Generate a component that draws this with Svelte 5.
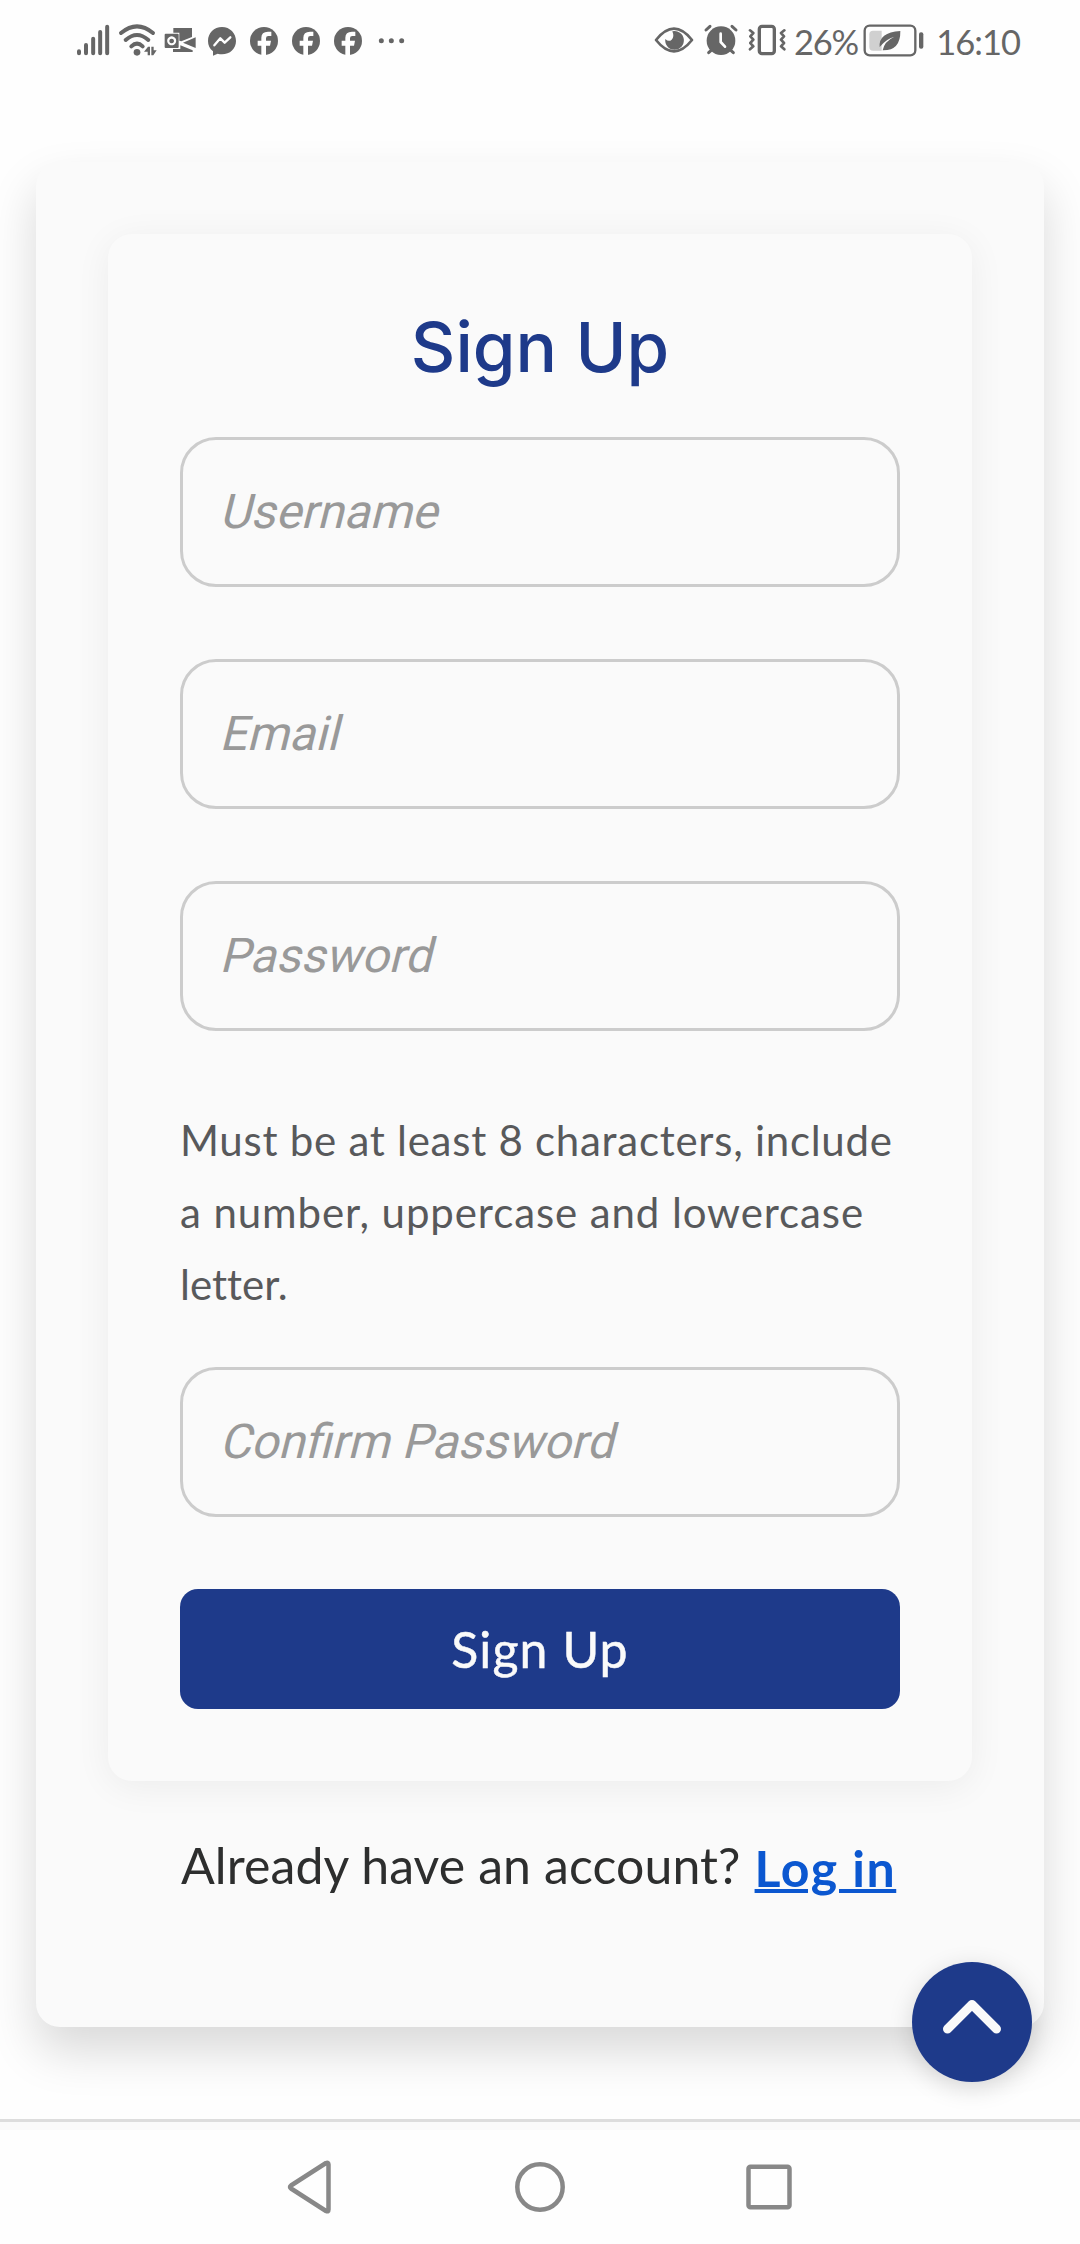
<script>
  let username = $state('');
  let email = $state('');
  let password = $state('');
  let confirm = $state('');

  const notifications = [612, 738, 864];
</script>

<div class="screen">
  <header class="status">
    <svg class="left-icons" viewBox="0 0 1080 180" width="360" height="60" aria-hidden="true">
      <g stroke-width="12" stroke-linecap="round" stroke="#666">
        <path d="M57 124v6M78 105v25M99.500 86v44M120.500 66v64M141.500 50v80" />
      </g>
      <g fill="none" stroke="#666" stroke-width="12" stroke-linecap="round">
        <path d="M183 69Q231 29 279 69M197 90Q231 60 265 90M214 109Q231 93 248 109" />
      </g>
      <circle cx="231" cy="127" r="10" fill="#666" />
      <path d="M252 125l12-15h6v26h-7v-11zM274 110h7v11h9l-10 15h-6z" fill="#666" />
      <g fill="#666">
        <path d="M340 54h56v27l-32 13-6-2V68h-18zM369 98l38-16v32zM339 117h22v-11l37 15v5h-59z" />
        <path fill-rule="evenodd" d="M317 71h36q3 0 3 3v37q0 3-3 3h-36q-3 0-3-3v-37q0-3 3-3zM335 79a13.500 13.500 0 1 0 .1 0zM335 86a7 7 0 1 1-.1 0z" />
        <path d="M486 51c-24 0-42 18-42 42 0 13 5 23 15 31v13l14-6c4 1 9 2 13 2 24 0 42-17 42-40s-18-42-42-42z" />
        {#each notifications as cx}
          <circle {cx} cy="93" r="42" />
        {/each}
        <circle cx="964" cy="92" r="7.500" />
        <circle cx="994" cy="92" r="7.500" />
        <circle cx="1025" cy="92" r="7.500" />
      </g>
      <path d="M463 106l18-21 13 13 17-16" fill="none" stroke="#fff" stroke-width="7" stroke-linejoin="round" stroke-linecap="round" />
      {#each notifications as cx}
        <path transform="translate({cx} 93)" d="M-8 44V14h-11V-1h11v-9q0-18 20-18h10v13H13q-7 0-7 7v7h15l-3 15H6v30z" fill="#fff" />
      {/each}
    </svg>

    <div class="right">
      <svg viewBox="0 0 450 180" width="150" height="60" aria-hidden="true">
        <path d="M48 90Q102 22 156 90Q102 158 48 90z" fill="none" stroke="#666" stroke-width="8" stroke-linejoin="round" />
        <path d="M97 64a28 28 0 1 1-21 23q10 10 19 2 9-8 2-25z" fill="#666" />
        <g stroke="#666" stroke-width="9" stroke-linecap="round">
          <path d="M198 60l12-11M288 60l-12-11M206 128l10-9M280 128l-10-9" />
        </g>
        <circle cx="243" cy="92" r="43" fill="#666" />
        <path d="M242 71v25l13 14" fill="none" stroke="#fff" stroke-width="8" stroke-linecap="round" stroke-linejoin="round" />
        <rect x="358" y="49" width="45" height="82" rx="8" fill="none" stroke="#666" stroke-width="10" />
        <path d="M330 61l10 8-9 10 9 10-9 10 9 10-10 9M433 61l-10 8 9 10-9 10 9 10-9 10 10 9" fill="none" stroke="#666" stroke-width="8" stroke-linecap="round" stroke-linejoin="round" />
      </svg>
      <span class="percent">26%</span>
      <svg viewBox="666 0 195 180" width="65" height="60" aria-hidden="true">
        <rect x="677" y="47" width="152" height="89" rx="15" fill="none" stroke="#666" stroke-width="7" />
        <path d="M702 62h26v60h-26q-11 0-11-11V73q0-11 11-11z" fill="#d0d0d0" />
        <path d="M784 63q-66 5-62 48 20-25 44-31-30 14-35 41 54 1 53-58z" fill="#666" />
        <rect x="840" y="67" width="13" height="49" rx="6" fill="#666" />
      </svg>
      <span class="clock">16:10</span>
    </div>
  </header>

  <main>
    <section class="panel">
      <form class="card" onsubmit={(e) => e.preventDefault()}>
        <h1>Sign Up</h1>
        <label class="field">
          <input type="text" bind:value={username} />
          {#if !username}<span>Username</span>{/if}
        </label>
        <label class="field">
          <input type="email" bind:value={email} />
          {#if !email}<span>Email</span>{/if}
        </label>
        <label class="field">
          <input type="password" bind:value={password} />
          {#if !password}<span>Password</span>{/if}
        </label>
        <p class="hint">
          <span class="l1">Must be at least 8 characters, include</span>
          <span class="l2">a number, uppercase and lowercase</span>
          <span class="l3">letter.</span>
        </p>
        <label class="field">
          <input type="password" bind:value={confirm} />
          {#if !confirm}<span>Confirm Password</span>{/if}
        </label>
        <button class="submit" type="submit">Sign Up</button>
      </form>
      <p class="login">
        <span>Already have an account?</span>
        <a href="#login">Log in</a>
      </p>
    </section>
    <button class="to-top" type="button" aria-label="Back to top">
      <svg viewBox="0 0 120 120" width="120" height="120" aria-hidden="true">
        <path d="M35.500 67L60 42.500 84.500 67" fill="none" stroke="#fafafa" stroke-width="9" stroke-linecap="round" stroke-linejoin="round" />
      </svg>
    </button>
  </main>

  <nav>
    <svg viewBox="0 0 60 60" width="60" height="60" aria-hidden="true">
      <path d="M10 28.500q-2 1.500 0 3L45 54q2.500 1.200 2.500-1.500v-45Q47.500 5 45 6z" />
    </svg>
    <svg viewBox="0 0 60 60" width="60" height="60" aria-hidden="true">
      <circle cx="30" cy="30" r="22.700" />
    </svg>
    <svg viewBox="0 0 60 60" width="60" height="60" aria-hidden="true">
      <rect x="9.500" y="9.800" width="41" height="40.500" rx="2" />
    </svg>
  </nav>
</div>

<style>
  :global(body) {
    margin: 0;
    background: #fff;
  }

  .screen {
    width: 1080px;
    height: 2244px;
    overflow: hidden;
    display: flex;
    flex-direction: column;
    background: #fefefe;
    font-family: Lato, "Open Sans", sans-serif;
    font-variant-ligatures: none;
    color: #2d2e2e;
  }

  svg {
    display: block;
    flex: none;
  }

  .status {
    height: 80px;
    flex: none;
    display: flex;
    justify-content: space-between;
    align-items: flex-start;
    padding: 10px 60px 0;
    box-sizing: border-box;
  }

  .right {
    display: flex;
    align-items: center;
    width: 380px;
    height: 60px;
    color: #666;
    font-size: 34.500px;
    line-height: 60px;
    white-space: nowrap;
  }

  .percent {
    width: 73px;
    box-sizing: border-box;
    padding: 3px 0 0 4px;
    letter-spacing: -1.2px;
  }

  .clock {
    padding: 3px 0 0 10px;
    letter-spacing: -1px;
  }

  main {
    position: relative;
    height: 2039px;
    flex: none;
    padding: 82px 36px 0;
    box-sizing: border-box;
  }

  .panel {
    height: 1865px;
    padding: 72px 72px 0;
    box-sizing: border-box;
    border-radius: 24px;
    background: #fafafa;
    box-shadow: 0 24px 48px rgba(0, 0, 0, 0.15);
  }

  .card {
    height: 1547px;
    padding: 72px;
    box-sizing: border-box;
    border-radius: 24px;
    background: #fafafa;
    box-shadow: 0 6px 36px rgba(0, 0, 0, 0.06);
    display: flex;
    flex-direction: column;
  }

  h1 {
    margin: 0 0 48px;
    height: 83px;
    line-height: 83px;
    text-align: center;
    font-family: Inter, Roboto, sans-serif;
    font-weight: 500;
    font-size: 69px;
    color: #1e3a8a;
  }

  .field {
    display: grid;
    width: 720px;
    height: 150px;
    flex: none;
    margin-bottom: 72px;
    font-family: Roboto, sans-serif;
    font-variant-ligatures: normal;
    font-size: 48px;
  }

  .field > * {
    grid-area: 1 / 1;
  }

  .field span {
    align-self: center;
    justify-self: start;
    padding-left: 39px;
    line-height: 56px;
    color: #999;
    transform: skewX(-14deg);
    transform-origin: 0 45px;
    pointer-events: none;
  }

  input {
    width: 100%;
    height: 100%;
    margin: 0;
    padding: 0 39px;
    box-sizing: border-box;
    border: 3px solid #ccc;
    border-radius: 36px;
    background: transparent;
    font: inherit;
    color: #2d2e2e;
  }

  .hint {
    margin: 0 0 48px;
    padding-top: 1px;
    height: 216px;
    box-sizing: border-box;
    font-size: 42px;
    line-height: 72px;
    color: #58595b;
    white-space: nowrap;
  }

  .hint span {
    display: block;
  }

  .l1 {
    letter-spacing: 0.74px;
  }

  .l2 {
    letter-spacing: 0.9px;
  }

  .submit {
    height: 120px;
    flex: none;
    padding: 0;
    border: 0;
    border-radius: 18px;
    background: #1e3a8a;
    color: #fafafa;
    font-family: inherit;
    font-weight: 400;
    font-size: 50px;
    line-height: 120px;
    letter-spacing: 1.1px;
    -webkit-text-stroke: 0.5px #fafafa;
  }

  .login {
    display: flex;
    align-items: flex-start;
    margin: 48px 0 0 73px;
    font-size: 50px;
    line-height: 72px;
    white-space: nowrap;
  }

  .login span {
    letter-spacing: 0.1px;
  }

  .login a {
    margin-left: 14px;
    padding-top: 3px;
    font-weight: 700;
    letter-spacing: 1.5px;
    color: #0b57d0;
    text-decoration: underline;
    text-decoration-thickness: 4px;
    text-underline-offset: 2px;
  }

  .to-top {
    position: absolute;
    right: 48px;
    bottom: 37px;
    width: 120px;
    height: 120px;
    padding: 0;
    border: 0;
    border-radius: 50%;
    background: #1e3a8a;
    box-shadow: 0 6px 24px rgba(0, 0, 0, 0.15);
  }

  nav {
    height: 125px;
    flex: none;
    box-sizing: border-box;
    padding-top: 35px;
    border-top: 3px solid #ddd;
    background: linear-gradient(#fafafa 8px, #fefefe 8px);
    display: flex;
    justify-content: center;
    gap: 169px;
  }

  nav svg {
    fill: none;
    stroke: #888;
    stroke-width: 4.500;
    stroke-linejoin: round;
  }
</style>
